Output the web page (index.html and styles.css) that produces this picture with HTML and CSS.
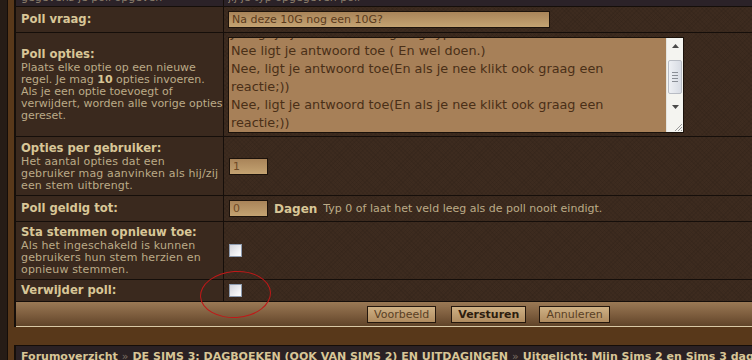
FILE: index.html
```html
<!DOCTYPE html>
<html lang="nl">
<head>
    <meta charset="UTF-8">
    <title>Poll maken</title>
    <link rel="stylesheet" href="styles.css">
</head>
<body>
    <div class="frame">
        <div class="panel">
            <div class="form-grid">
                <div class="cell prev"><span class="clip"><span>gegevens je poll opgeven</span></span></div>
                <div class="cell prev value"><span class="clip"><span>jij je typ opgegeven poll</span></span></div>

                <div class="cell label row-q"><b>Poll vraag:</b></div>
                <div class="cell value row-q">
                    <div class="input wide">Na deze 10G nog een 10G?</div>
                </div>

                <div class="cell label row-opts">
                    <b>Poll opties:</b>
                    <span class="desc">Plaats elke optie op een nieuwe<br>regel. Je mag <strong>10</strong> opties invoeren.<br>Als je een optie toevoegt of<br>verwijdert, worden alle vorige opties<br>gereset.</span>
                </div>
                <div class="cell value row-opts">
                    <div class="textarea">
                        <div class="ta-text">
                            Ja, ligt je jouw antwoord graag typ<br>
                            Nee ligt je antwoord toe ( En wel doen.)<br>
                            Nee, ligt je antwoord toe(En als je nee klikt ook graag een<br>
                            reactie;))<br>
                            Nee, ligt je antwoord toe(En als je nee klikt ook graag een<br>
                            reactie;))
                        </div>
                        <div class="scrollbar">
                            <div class="sb-btn">
                                <svg width="7" height="4" viewBox="0 0 7 4"><path d="M0 4 L3.5 0 L7 4 Z" fill="#4a4a4a"/></svg>
                            </div>
                            <div class="sb-track">
                                <div class="sb-thumb"><i></i><i></i><i></i><i></i></div>
                            </div>
                            <div class="sb-btn">
                                <svg width="7" height="4" viewBox="0 0 7 4"><path d="M0 0 L3.5 4 L7 0 Z" fill="#4a4a4a"/></svg>
                            </div>
                            <div class="sb-corner">
                                <svg width="10" height="10" viewBox="0 0 10 10"><path d="M9 2 L2 9 M9 5 L5 9 M9 8 L8 9" stroke="#9a9a9a" stroke-width="1"/></svg>
                            </div>
                        </div>
                    </div>
                </div>

                <div class="cell label row-per">
                    <b>Opties per gebruiker:</b>
                    <span class="desc">Het aantal opties dat een<br>gebruiker mag aanvinken als hij/zij<br>een stem uitbrengt.</span>
                </div>
                <div class="cell value row-per">
                    <div class="input small">1</div>
                </div>

                <div class="cell label row-tot"><b>Poll geldig tot:</b></div>
                <div class="cell value row-tot">
                    <div class="input small">0</div>
                    <b class="unit">Dagen</b>
                    <span class="hint">Typ 0 of laat het veld leeg als de poll nooit eindigt.</span>
                </div>

                <div class="cell label row-again">
                    <b>Sta stemmen opnieuw toe:</b>
                    <span class="desc">Als het ingeschakeld is kunnen<br>gebruikers hun stem herzien en<br>opnieuw stemmen.</span>
                </div>
                <div class="cell value row-again">
                    <span class="checkbox"></span>
                </div>

                <div class="cell label row-del"><b>Verwijder poll:</b></div>
                <div class="cell value row-del">
                    <span class="checkbox"></span>
                </div>
            </div>

            <div class="buttons">
                <button class="btn">Voorbeeld</button>
                <button class="btn main">Versturen</button>
                <button class="btn">Annuleren</button>
            </div>
        </div>

        <div class="breadcrumbs">
            <a href="#">Forumoverzicht</a><span class="sep">»</span><a href="#">DE SIMS 3: DAGBOEKEN (OOK VAN SIMS 2) EN UITDAGINGEN</a><span class="sep">»</span><a href="#">Uitgelicht: Mijn Sims 2 en Sims 3 dagboeken</a>
        </div>

        <div class="marker"></div>
    </div>
</body>
</html>
```

FILE: styles.css
```css
* {
    margin: 0;
    padding: 0;
    box-sizing: border-box;
}

body {
    font-family: 'DejaVu Sans', Verdana, sans-serif;
    background: #261c16;
    width: 752px;
    height: 360px;
    overflow: hidden;
}

.frame {
    position: relative;
    margin-left: 7px;
    border-left: 1px solid #140d09;
    background: #58381a;
    padding-left: 6px;
    height: 360px;
}

.panel {
    border-left: 2px solid #160f0a;
}

.form-grid {
    display: grid;
    grid-template-columns: 207px 1fr;
    gap: 1px 1px;
    background: #150e0a;
    border-bottom: 1px solid #150e0a;
}

.cell {
    background: #3a291e;
    display: flex;
    flex-direction: column;
    justify-content: center;
    padding: 0 1px 0 5px;
    color: #d8c697;
    font-size: 12px;
}

.cell.value {
    background-color: #3d2b1f;
    background-image:
        repeating-linear-gradient(45deg, rgba(0,0,0,0.06) 0 1px, transparent 1px 3px),
        repeating-linear-gradient(-45deg, rgba(0,0,0,0.06) 0 1px, transparent 1px 3px);
    padding: 0 4px;
    align-items: flex-start;
}

.cell.prev {
    background: #2b2228;
    height: 6px;
    overflow: hidden;
    justify-content: flex-start;
}

.clip {
    display: block;
    height: 4px;
    overflow: hidden;
    font-size: 11px;
    color: #8a7e6c;
    white-space: nowrap;
}

.clip span {
    display: block;
    line-height: 13px;
    margin-top: -9px;
}

.row-q { height: 25px; }
.row-opts { height: 103px; }
.row-per { height: 58px; }
.row-tot { height: 25px; }
.row-again { height: 57px; }
.row-del { height: 21px; }

.row-tot.value {
    flex-direction: row;
    align-items: center;
    justify-content: flex-start;
}

.label b {
    font-size: 11.6px;
    line-height: 15px;
}

.desc {
    font-size: 11px;
    line-height: 12px;
    color: #bcab88;
    white-space: nowrap;
    letter-spacing: 0.15px;
}

.row-opts .desc {
    letter-spacing: 0;
}

.desc strong {
    color: #d8c697;
}

.input {
    height: 17px;
    border: 1px solid #1c120b;
    background: linear-gradient(to bottom, #a98459, #c4a372);
    color: #5a3a1c;
    font-size: 11px;
    line-height: 15px;
    padding: 0 3px;
}

.input.wide {
    width: 322px;
}

.input.small {
    width: 39px;
    margin-left: 1px;
    color: #6e4a26;
}

.unit {
    font-size: 12px;
    margin-left: 6px;
    color: #d8c697;
}

.hint {
    font-size: 11px;
    color: #bcab88;
    margin-left: 6px;
}

.textarea {
    width: 456px;
    height: 96px;
    border: 1px solid #1a110a;
    background: #a78058;
    display: flex;
    overflow: hidden;
}

.ta-text {
    flex: 1;
    font-size: 12.8px;
    line-height: 18px;
    color: #4a2f17;
    padding-left: 2px;
    margin-top: -14px;
    white-space: nowrap;
    overflow: hidden;
}

.scrollbar {
    width: 17px;
    background: #f4f4f0;
    display: flex;
    flex-direction: column;
    border-left: 1px solid #e4e4e0;
}

.sb-btn {
    height: 17px;
    display: flex;
    align-items: center;
    justify-content: center;
}

.sb-track {
    flex: 1;
    padding: 5px 1px 0;
}

.sb-thumb {
    height: 34px;
    border: 1px solid #b8bcc4;
    border-radius: 2px;
    background: linear-gradient(to right, #eef0f4, #d8dce4);
    display: flex;
    flex-direction: column;
    justify-content: center;
    align-items: center;
    gap: 2px;
}

.sb-thumb i {
    display: block;
    width: 6px;
    height: 1px;
    background: #8a8e96;
}

.sb-corner {
    height: 16px;
    display: flex;
    align-items: flex-end;
    justify-content: flex-end;
}

.checkbox {
    display: block;
    width: 13px;
    height: 13px;
    margin-left: 1px;
    border: 1px solid #8e9cb0;
    background: linear-gradient(135deg, #d4d4da 0%, #f4f4f6 70%, #ffffff 100%);
}

.buttons {
    height: 25px;
    background: linear-gradient(to bottom, #9a7955 0%, #7c5c3d 55%, #604429 100%);
    border-bottom: 1px solid #d9c9a6;
    display: flex;
    align-items: center;
    padding-left: 351px;
    gap: 14px;
}

.btn {
    font-family: 'DejaVu Sans', Verdana, sans-serif;
    font-size: 11px;
    height: 17px;
    padding: 0 6px;
    border: 1px solid #24170d;
    background: linear-gradient(to bottom, #cfb185, #b08c60);
    color: #5a4024;
    line-height: 15px;
}

.btn.main {
    font-weight: bold;
    color: #2e1d0e;
    padding: 0 6px;
    margin-left: 1px;
}

.btn.main + .btn {
    margin-left: -1px;
}

.breadcrumbs {
    margin-top: 18px;
    border-top: 1px solid #140d09;
    border-left: 2px solid #160f0a;
    background: #2a2124;
    height: 20px;
    padding: 4px 5px 0;
    font-size: 11px;
    font-weight: bold;
    white-space: nowrap;
    overflow: hidden;
}

.breadcrumbs a {
    color: #d8c697;
    text-decoration: none;
}

.breadcrumbs .sep {
    color: #7a6e62;
    font-weight: normal;
    margin: 0 4px;
}

.marker {
    position: absolute;
    left: 192px;
    top: 271px;
    width: 71px;
    height: 47px;
    border: 1.5px solid #c01818;
    border-radius: 50%;
    transform: rotate(-4deg);
}
```
